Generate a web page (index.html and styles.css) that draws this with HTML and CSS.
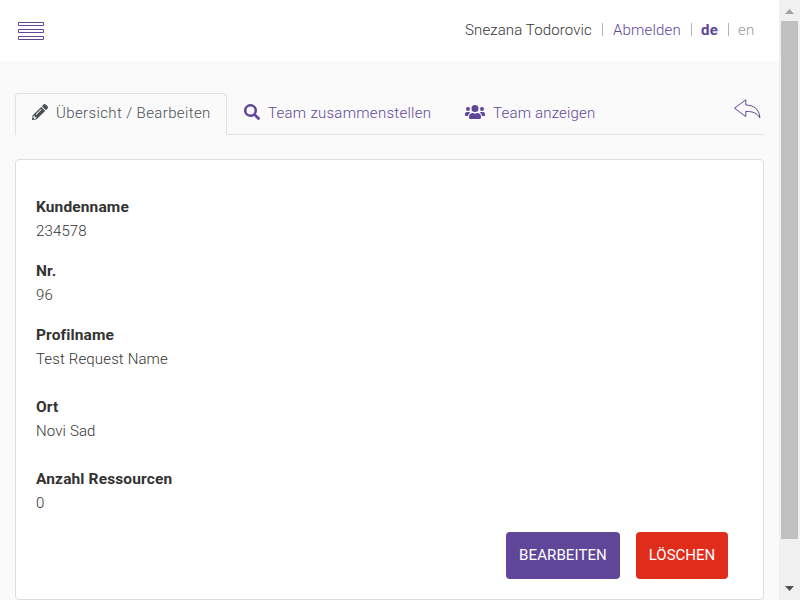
FILE: index.html
```html
<!DOCTYPE html>
<html lang="de">
<head>
<meta charset="utf-8">
<title>Übersicht / Bearbeiten</title>
<link rel="stylesheet" href="styles.css">
</head>
<body>
<div class="page">
  <header class="header">
    <svg class="menu" width="26" height="19" viewBox="0 0 26 19"><path d="M.5 .5h25v3h-25zM.5 7.5h25v3h-25zM.5 14.5h25v3h-25z"/></svg>
    <nav class="user-nav">
      <span class="user">Snezana Todorovic</span><i class="sep"></i><a class="logout">Abmelden</a><i class="sep"></i><a class="lang-active">de</a><i class="sep"></i><a class="lang">en</a>
    </nav>
  </header>
  <main class="main">
    <div class="tabs">
      <a class="tab tab-active"><svg width="16" height="16" viewBox="0 0 512 512"><path d="M498 142l-46 46c-5 5-13 5-17 0L324 77c-5-5-5-12 0-17l46-46c19-19 49-19 68 0l60 60c19 19 19 49 0 68zm-214-42L22 362 0 484c-3 16 12 30 28 28l122-22 262-262c5-5 5-13 0-17L301 100c-4-5-12-5-17 0zM124 340c-5-6-5-14 0-20l154-154c6-5 14-5 20 0s5 14 0 20L144 340c-6 5-14 5-20 0zm-36 84h48v36l-64 12-32-31 12-65h36v48z"/></svg><span class="t1">Übersicht / Bearbeiten</span></a>
      <a class="tab"><svg width="16" height="16" viewBox="0 0 512 512"><path d="M505 443L405 343c-4-4-10-7-17-7h-16a208 208 0 1 0-36 36v16c0 7 3 13 7 17l100 100c9 9 24 9 34 0l28-28c9-9 9-25 0-34zM208 336a128 128 0 1 1 0-256 128 128 0 0 1 0 256z"/></svg><span class="t2">Team zusammenstellen</span></a>
      <a class="tab tab-team"><svg width="20" height="16" viewBox="0 0 640 512"><path d="M96 224a64 64 0 1 0 0-128 64 64 0 0 0 0 128zm448 0a64 64 0 1 0 0-128 64 64 0 0 0 0 128zm32 32h-64c-18 0-34 7-45 18 40 22 69 62 75 110h66c18 0 32-14 32-32v-32c0-35-29-64-64-64zm-256 0a112 112 0 1 0 0-224 112 112 0 0 0 0 224zm77 32h-8a155 155 0 0 1-138 0h-8c-64 0-115 52-115 115v29c0 27 21 48 48 48h288c27 0 48-21 48-48v-29c0-63-51-115-115-115zm-224-14c-11-11-27-18-45-18H64c-35 0-64 29-64 64v32c0 18 14 32 32 32h66c6-48 35-88 75-110z"/></svg><span class="t3">Team anzeigen</span></a>
      <svg class="back" width="28" height="21" viewBox="0 0 28 21"><path d="M1.5 9.2L12.8 .8V6C21 6.2 26.2 10 26.9 19 24 14 20 12.4 12.8 12.4v5.2z"/></svg>
    </div>
    <section class="card">
      <dl>
        <div class="field"><dt>Kundenname</dt><dd>234578</dd></div>
        <div class="field"><dt>Nr.</dt><dd>96</dd></div>
        <div class="field field-wide"><dt>Profilname</dt><dd>Test Request Name</dd></div>
        <div class="field field-wide"><dt>Ort</dt><dd>Novi Sad</dd></div>
        <div class="field"><dt>Anzahl Ressourcen</dt><dd>0</dd></div>
      </dl>
      <div class="actions"><button class="btn edit">BEARBEITEN</button><button class="btn delete">LÖSCHEN</button></div>
    </section>
  </main>
</div>
<aside class="scrollbar"><svg width="9" height="5" viewBox="0 0 9 5"><path fill="#a3a3a3" d="M0 5L4.5 0 9 5z"/></svg><div class="thumb"></div><svg class="down" width="9" height="5" viewBox="0 0 9 5"><path fill="#505050" d="M0 0h9L4.5 5z"/></svg></aside>
</body>
</html>
```
FILE: styles.css
```css
* { box-sizing: border-box; }
body {
  margin: 0;
  display: flex;
  height: 600px;
  overflow: hidden;
  background: #fafafa;
  color: #333;
  font: 300 15px/24px Roboto, "Liberation Sans", sans-serif;
}
.page { width: 779px; }
.header {
  height: 61px;
  padding: 0 24px 0 18px;
  display: flex;
  justify-content: space-between;
  background: #fff;
}
.menu { margin-top: 22px; fill: none; stroke: #5f4699; }
.user-nav { display: flex; margin-top: 18px; white-space: nowrap; }
.user { width: 128px; letter-spacing: .12px; }
.logout { width: 69px; color: #5f4699; letter-spacing: .17px; }
.lang-active { width: 18px; color: #5f4699; font-weight: 700; letter-spacing: .2px; }
.lang { width: 17px; color: #999; letter-spacing: .2px; }
.sep { width: 1px; height: 13px; margin: 5px 9px 0; background: #b4b0be; }
.user + .sep, .logout + .sep { margin-right: 10px; }
.logout + .sep { margin-right: 9px; }
.lang { margin-right: -1px; width: 18px; }
.main { padding: 32px 15px 0; }
.tabs {
  display: flex;
  height: 42px;
  border-bottom: 1px solid #dee2e6;
}
.tab {
  display: flex;
  height: 42px;
  padding: 8px 17px 0;
  color: #5f4699;
  fill: #5f4699;
  white-space: nowrap;
}
.tab svg { margin: 3px 8px 0 0; flex: none; }
.tab-active {
  width: 212px;
  padding: 7px 16px 0;
  border: 1px solid #dee2e6;
  border-bottom: 0;
  border-radius: 4px 4px 0 0;
  background: #fafafa;
  color: #495057;
  fill: #495057;
}
.tab-team { padding-left: 0; }
.t1 { letter-spacing: .38px; }
.t2 { width: 180px; letter-spacing: .28px; }
.t3 { letter-spacing: .2px; }
.back { margin: 6px 3px 0 auto; fill: none; stroke: #5f4699; }
.card {
  height: 441px;
  margin-top: 24px;
  padding: 35px 35px 0 20px;
  border: 1px solid #dcdee0;
  border-radius: 4px;
  background: #fff;
}
dl, dd { margin: 0; }
dt { font-size: 15.5px; font-weight: 700; letter-spacing: .13px; }
dd { letter-spacing: .14px; }
.field { height: 64px; }
.field-wide { height: 72px; }
dl { height: 337px; }
.actions { display: flex; justify-content: flex-end; gap: 16px; }
.btn {
  height: 47px;
  padding: 0 0 1px;
  border: 0;
  border-radius: 4px;
  color: #fff;
  font: 400 15px/45px Roboto, "Liberation Sans", sans-serif;
}
.edit { width: 114px; background: #5f4699; letter-spacing: .1px; }
.delete { width: 92px; background: #e02d1b; }
.scrollbar {
  width: 21px;
  height: 600px;
  padding-top: 9px;
  display: flex;
  flex-direction: column;
  align-items: center;
  background: #f0f0f0;
}
.thumb { width: 17px; height: 518px; margin-top: 7px; background: #c0c0c0; }
.down { margin-top: 47px; }
```
